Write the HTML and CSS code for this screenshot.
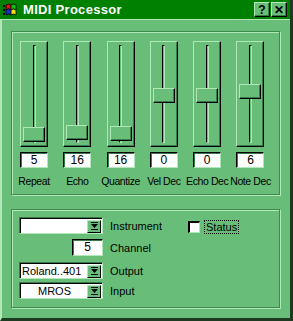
FILE: index.html
```html
<!DOCTYPE html>
<html lang="en">
<head>
    <meta charset="UTF-8">
    <link rel="stylesheet" href="styles.css">
    <title>MIDI Processor</title>
</head>
<body>
    <div class="window">
        <div class="titlebar">
            <svg class="app-icon" width="16" height="16" viewBox="0 0 16 16">
                <rect x="0" y="3" width="2" height="2" fill="#000"/>
                <rect x="0" y="7" width="2" height="2" fill="#000"/>
                <rect x="0" y="11" width="2" height="2" fill="#000"/>
                <path d="M3 3 Q5.5 1 8 3 V8 Q5.5 6 3 8 Z" fill="#e01010" stroke="#000" stroke-width="0.8"/>
                <path d="M8 3 Q10.5 1 13 3 V8 Q10.5 6 8 8 Z" fill="#10c010" stroke="#000" stroke-width="0.8"/>
                <path d="M3 8 Q5.5 6 8 8 V13 Q5.5 11 3 13 Z" fill="#1030e0" stroke="#000" stroke-width="0.8"/>
                <path d="M8 8 Q10.5 6 13 8 V13 Q10.5 11 8 13 Z" fill="#f0e010" stroke="#000" stroke-width="0.8"/>
            </svg>
            <span class="title">MIDI Processor</span>
            <button class="title-btn">?</button>
            <button class="title-btn">&#x2715;</button>
        </div>

        <div class="content">
            <div class="group sliders">
                <div class="slider-col">
                    <div class="slider"><div class="track"></div><div class="thumb" style="top: 85px"></div></div>
                    <div class="value">5</div>
                    <div class="slider-label">Repeat</div>
                </div>
                <div class="slider-col">
                    <div class="slider"><div class="track"></div><div class="thumb" style="top: 83px"></div></div>
                    <div class="value">16</div>
                    <div class="slider-label">Echo</div>
                </div>
                <div class="slider-col">
                    <div class="slider"><div class="track"></div><div class="thumb" style="top: 84px"></div></div>
                    <div class="value">16</div>
                    <div class="slider-label">Quantize</div>
                </div>
                <div class="slider-col">
                    <div class="slider"><div class="track"></div><div class="thumb" style="top: 46px"></div></div>
                    <div class="value">0</div>
                    <div class="slider-label">Vel Dec</div>
                </div>
                <div class="slider-col">
                    <div class="slider"><div class="track"></div><div class="thumb" style="top: 46px"></div></div>
                    <div class="value">0</div>
                    <div class="slider-label">Echo Dec</div>
                </div>
                <div class="slider-col">
                    <div class="slider"><div class="track"></div><div class="thumb" style="top: 42px"></div></div>
                    <div class="value">6</div>
                    <div class="slider-label">Note Dec</div>
                </div>
            </div>

            <div class="group settings">
                <div class="row row-instrument">
                    <div class="field">
                        <div class="combo"><span class="combo-text"></span><span class="drop"><svg width="7" height="8" viewBox="0 0 7 8"><rect x="0" y="0" width="7" height="1" fill="#000"/><path d="M0 2 H7 L3.5 6 Z" fill="#000"/><rect x="0" y="7" width="7" height="1" fill="#000"/></svg></span></div>
                    </div>
                    <span class="label">Instrument</span>
                    <span class="checkbox"></span>
                    <span class="check-label">Status</span>
                </div>
                <div class="row row-channel">
                    <div class="field field-right">
                        <div class="number-box">5</div>
                    </div>
                    <span class="label">Channel</span>
                </div>
                <div class="row row-output">
                    <div class="field">
                        <div class="combo"><span class="combo-text">Roland..401</span><span class="drop"><svg width="7" height="8" viewBox="0 0 7 8"><rect x="0" y="0" width="7" height="1" fill="#000"/><path d="M0 2 H7 L3.5 6 Z" fill="#000"/><rect x="0" y="7" width="7" height="1" fill="#000"/></svg></span></div>
                    </div>
                    <span class="label">Output</span>
                </div>
                <div class="row row-input">
                    <div class="field">
                        <div class="combo"><span class="combo-text centered">MROS</span><span class="drop"><svg width="7" height="8" viewBox="0 0 7 8"><rect x="0" y="0" width="7" height="1" fill="#000"/><path d="M0 2 H7 L3.5 6 Z" fill="#000"/><rect x="0" y="7" width="7" height="1" fill="#000"/></svg></span></div>
                    </div>
                    <span class="label">Input</span>
                </div>
            </div>
        </div>
    </div>
</body>
</html>
```

FILE: styles.css
```css
body {
    margin: 0;
    padding: 0;
    background-color: #68bd78;
}

.window {
    width: 293px;
    height: 321px;
    box-sizing: border-box;
    display: flex;
    flex-direction: column;
    background-color: #68bd78;
    border-right: 3px solid #1e3b22;
    font-family: 'Liberation Sans', Arial, sans-serif;
    color: #000;
}

.titlebar {
    height: 19px;
    flex-shrink: 0;
    display: flex;
    align-items: center;
    background-color: #008000;
    padding: 0 3px 0 3px;
}

.app-icon {
    display: block;
}

.title {
    flex: 1;
    margin-left: 4px;
    color: #fff;
    font-weight: bold;
    font-size: 13px;
    letter-spacing: 0.3px;
}

.title-btn {
    width: 16px;
    height: 15px;
    margin: 0 0 0 1px;
    padding: 0;
    box-sizing: border-box;
    background-color: #68bd78;
    border-top: 1px solid #b0e8b8;
    border-left: 1px solid #b0e8b8;
    border-right: 1px solid #000;
    border-bottom: 1px solid #000;
    box-shadow: inset -1px -1px 0 #3a7a48;
    font-family: 'Liberation Sans', Arial, sans-serif;
    font-weight: bold;
    font-size: 12px;
    line-height: 12px;
    color: #000;
}

.content {
    flex: 1;
    display: flex;
    flex-direction: column;
    border-top: 1px solid #b0e8b8;
    border-left: 2px solid #b0e8b8;
    border-bottom: 3px solid #1e3b22;
    padding: 11px 10px 0 9px;
}

.group {
    box-sizing: border-box;
    border: 1px solid #3f8a50;
    box-shadow: inset 1px 1px 0 #b0e8b8, 1px 1px 0 #b0e8b8;
}

.sliders {
    height: 164px;
    display: flex;
    gap: 15.3px;
    padding: 9px 0 0 8px;
}

.slider-col {
    width: 28px;
    display: flex;
    flex-direction: column;
    align-items: center;
}

.slider {
    position: relative;
    width: 28px;
    height: 106px;
    box-sizing: border-box;
    border-top: 1px solid #b0e8b8;
    border-left: 1px solid #b0e8b8;
    border-right: 1px solid #000;
    border-bottom: 1px solid #000;
    box-shadow: inset -1px -1px 0 #3a7a48;
    padding-top: 3px;
}

.track {
    width: 1px;
    height: 96px;
    margin: 0 auto;
    border-top: 1px solid #000;
    border-left: 1px solid #000;
    border-right: 1px solid #b0e8b8;
    border-bottom: 1px solid #b0e8b8;
    background-color: #68bd78;
}

.thumb {
    position: absolute;
    left: 2px;
    width: 22px;
    height: 15px;
    box-sizing: border-box;
    background-color: #68bd78;
    border-top: 1px solid #b0e8b8;
    border-left: 1px solid #b0e8b8;
    border-right: 1px solid #000;
    border-bottom: 1px solid #000;
    box-shadow: inset -1px -1px 0 #3a7a48;
}

.value {
    width: 28px;
    height: 16px;
    margin-top: 5px;
    box-sizing: border-box;
    background-color: #fff;
    border-top: 1px solid #000;
    border-left: 1px solid #000;
    border-right: 1px solid #b0e8b8;
    border-bottom: 1px solid #b0e8b8;
    box-shadow: inset 1px 1px 0 #3a7a48;
    text-align: center;
    font-size: 12px;
    line-height: 14px;
}

.slider-label {
    margin-top: 7px;
    white-space: nowrap;
    font-size: 10.5px;
    letter-spacing: -0.4px;
    line-height: 12px;
}

.settings {
    height: 99px;
    margin-top: 14px;
    padding: 7px 0 0 7px;
}

.row {
    display: flex;
    align-items: center;
    height: 17px;
}

.row-channel {
    margin-top: 5px;
}

.row-output {
    margin-top: 6px;
}

.row-input {
    margin-top: 3px;
}

.field {
    width: 84px;
    display: flex;
}

.field-right {
    justify-content: flex-end;
}

.combo {
    width: 84px;
    height: 17px;
    box-sizing: border-box;
    display: flex;
    align-items: center;
    background-color: #fff;
    border-top: 1px solid #3a7a48;
    border-left: 1px solid #3a7a48;
    border-right: 1px solid #b0e8b8;
    border-bottom: 1px solid #b0e8b8;
    box-shadow: inset 1px 1px 0 #000;
    padding: 1px 1px 0 2px;
}

.combo-text {
    flex: 1;
    font-size: 11px;
    white-space: nowrap;
    overflow: hidden;
}

.combo-text.centered {
    text-align: center;
}

.drop {
    width: 14px;
    height: 13px;
    box-sizing: border-box;
    display: flex;
    align-items: center;
    justify-content: center;
    background-color: #68bd78;
    border-top: 1px solid #b0e8b8;
    border-left: 1px solid #b0e8b8;
    border-right: 1px solid #000;
    border-bottom: 1px solid #000;
}

.number-box {
    width: 31px;
    height: 17px;
    box-sizing: border-box;
    background-color: #fff;
    border-top: 1px solid #000;
    border-left: 1px solid #000;
    border-right: 1px solid #b0e8b8;
    border-bottom: 1px solid #b0e8b8;
    box-shadow: inset 1px 1px 0 #3a7a48;
    text-align: center;
    font-size: 12px;
    line-height: 15px;
}

.label {
    width: 78px;
    margin-left: 7px;
    font-size: 11px;
}

.checkbox {
    width: 12px;
    height: 12px;
    box-sizing: border-box;
    background-color: #fff;
    border-top: 2px solid #000;
    border-left: 2px solid #000;
    border-right: 1px solid #b0e8b8;
    border-bottom: 1px solid #b0e8b8;
    margin-top: 2px;
}

.check-label {
    margin-left: 4px;
    margin-top: 2px;
    padding: 0 1px;
    border: 1px dotted #000;
    font-size: 11px;
    line-height: 12px;
}
```
